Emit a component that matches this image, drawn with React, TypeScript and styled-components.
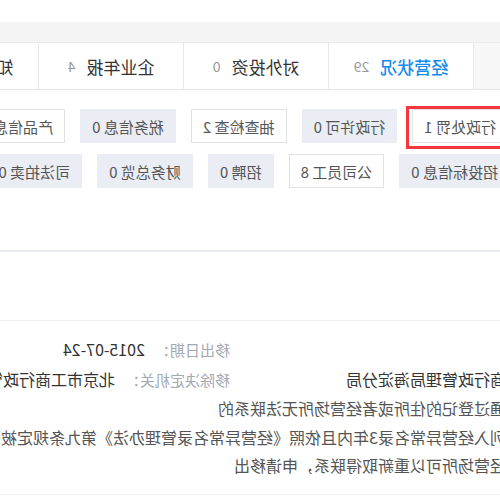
import React from "react";
import styled, { createGlobalStyle } from "styled-components";

const Global = createGlobalStyle`
  html, body { margin: 0; padding: 0; overflow: hidden; background: #fff; }
  body { font-family: "Noto Sans CJK SC", "Noto Sans", sans-serif; }
`;

const Page = styled.div`
  width: 500px;
  height: 500px;
  overflow: hidden;
  background: #fff;
  transform: scaleX(-1);
  position: relative;
`;

const TopSpace = styled.div`
  height: 22px;
`;

const Band = styled.div`
  height: 20px;
  background: #f5f4f5;
`;

const TabBar = styled.div`
  display: flex;
  height: 48px;
  box-sizing: border-box;
  border-top: 1px solid #ececec;
  border-bottom: 1px solid #e6e6e6;
  background: #fff;
`;

const TabStub = styled.div`
  flex: none;
  width: 26px;
  background: #f7f7f8;
`;

const Tab = styled.div<{ $active?: boolean }>`
  flex: none;
  width: 145px;
  box-sizing: border-box;
  border-left: 1px solid #e8e8e8;
  display: flex;
  align-items: center;
  justify-content: center;
  font-size: 17px;
  white-space: nowrap;
  color: ${(p) => (p.$active ? "#128bed" : "#333")};
  font-weight: ${(p) => (p.$active ? 500 : 400)};
`;

const TabCount = styled.span`
  margin-left: 11px;
  font-size: 14px;
  font-weight: 400;
  color: #999;
`;

const Filters = styled.div`
  padding-top: 19px;
  display: flex;
  flex-direction: column;
  gap: 11px;
`;

const FilterRow = styled.div<{ $shift?: number }>`
  display: flex;
  gap: 15px;
  margin-left: ${(p) => p.$shift ?? 0}px;
`;

const Chip = styled.div<{ $empty?: boolean; $marked?: boolean }>`
  flex: none;
  position: relative;
  height: 34px;
  box-sizing: border-box;
  padding: 0 11px;
  display: flex;
  align-items: center;
  font-size: 15px;
  white-space: nowrap;
  color: #555;
  background: ${(p) => (p.$empty ? "#eaedf4" : "#fff")};
  border: 1px solid ${(p) => (p.$empty ? "#eaedf4" : "#e2e2e2")};
  &::after {
    content: "";
    display: ${(p) => (p.$marked ? "block" : "none")};
    position: absolute;
    top: -4px;
    bottom: -7px;
    left: -12px;
    right: -7px;
    border: 3px solid #f5363b;
  }
`;

const Divider = styled.div`
  margin-top: 62px;
  height: 2px;
  background: #e9eef3;
`;

const Panel = styled.div`
  margin-top: 68px;
  border-top: 1px solid #eeeeee;
  border-bottom: 1px solid #eeeeee;
  padding: 14px 0 14px;
  overflow: hidden;
`;

const Grid = styled.div`
  margin-left: -192px;
  display: grid;
  grid-template-columns: 462px 1fr;
  line-height: 28.5px;
  white-space: nowrap;
`;

const Cell = styled.div`
  white-space: nowrap;
`;

const Wide = styled.div`
  grid-column: 1 / span 2;
  display: flex;
  white-space: nowrap;
`;

const Label = styled.span<{ $small?: boolean }>`
  flex: none;
  color: #a3a9b1;
  font-size: ${(p) => (p.$small ? 15 : 16)}px;
`;

const Value = styled.span`
  margin-left: 10px;
  color: #333;
  font-size: 16px;
`;

const Reason = styled.div`
  margin-left: 10px;
  color: #555;
  font-size: 16px;
`;

const tabs = [
  { name: "经营状况", count: 29, active: true },
  { name: "对外投资", count: 0 },
  { name: "企业年报", count: 4 },
  { name: "知识产权", count: 12 },
];

const row1 = [
  { name: "行政处罚", count: 1, marked: true },
  { name: "行政许可", count: 0 },
  { name: "抽查检查", count: 2 },
  { name: "税务信息", count: 0 },
  { name: "产品信息", count: 3 },
];

const row2 = [
  { name: "招投标信息", count: 0 },
  { name: "公司员工", count: 8 },
  { name: "招聘", count: 0 },
  { name: "财务总览", count: 0 },
  { name: "司法拍卖", count: 0 },
];

type Item = { name: string; count: number; marked?: boolean };

const Chips = ({ items }: { items: Item[] }) => (
  <>
    {items.map((it) => (
      <Chip key={it.name} $empty={it.count === 0} $marked={it.marked}>
        {it.name} {it.count}
      </Chip>
    ))}
  </>
);

export default function App() {
  return (
    <>
      <Global />
      <Page>
        <TopSpace />
        <Band />
        <TabBar>
          <TabStub />
          {tabs.map((t) => (
            <Tab key={t.name} $active={t.active}>
              {t.name}
              <TabCount>{t.count}</TabCount>
            </Tab>
          ))}
        </TabBar>
        <Filters>
          <FilterRow $shift={-8}>
            <Chips items={row1} />
          </FilterRow>
          <FilterRow $shift={-10}>
            <Chips items={row2} />
          </FilterRow>
        </Filters>
        <Divider />
        <Panel>
          <Grid>
            <Cell>
              <Label>列入日期：</Label>
              <Value>2014-07-24</Value>
            </Cell>
            <Cell>
              <Label $small>移出日期：</Label>
              <Value>2015-07-24</Value>
            </Cell>
            <Cell>
              <Label>列入决定机关：</Label>
              <Value>北京市工商行政管理局海淀分局</Value>
            </Cell>
            <Cell>
              <Label $small>移除决定机关：</Label>
              <Value>北京市工商行政管理局海淀分局</Value>
            </Cell>
            <Wide>
              <Label>列入经营异常名录原因：</Label>
              <Reason>通过登记的住所或者经营场所无法联系的</Reason>
            </Wide>
            <Wide>
              <Label>移出经营异常名录原因：</Label>
              <Reason>
                列入经营异常名录3年内且依照《经营异常名录管理办法》第九条规定被列入经营异常名录的企业，依法履行公示义务，其住所或
                <br />
                经营场所可以重新取得联系，申请移出
              </Reason>
            </Wide>
          </Grid>
        </Panel>
      </Page>
    </>
  );
}
